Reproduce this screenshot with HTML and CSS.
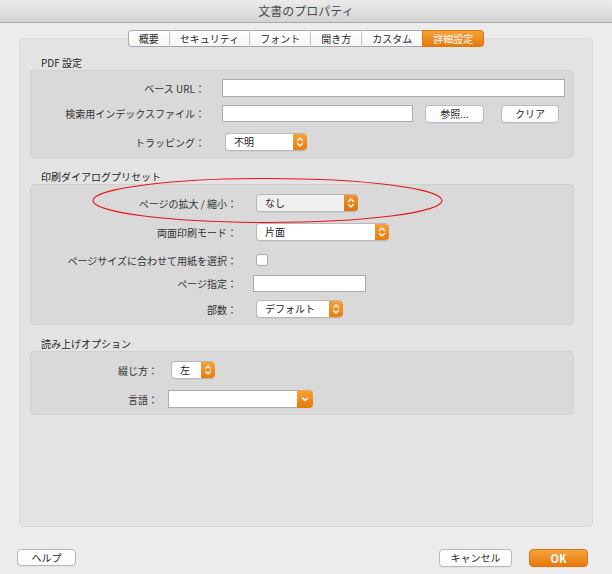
FILE: index.html
```html
<!DOCTYPE html>
<html lang="ja">
<head>
<meta charset="utf-8">
<title>文書のプロパティ</title>
<link rel="stylesheet" href="styles.css">
</head>
<body>
<div class="window">
  <div class="titlebar">文書のプロパティ</div>

  <div class="tabs">
    <div class="tab">概要</div>
    <div class="tab">セキュリティ</div>
    <div class="tab">フォント</div>
    <div class="tab">開き方</div>
    <div class="tab">カスタム</div>
    <div class="tab active">詳細設定</div>
  </div>

  <div class="panel">
    <div class="section-label">PDF 設定</div>
    <div class="group g1">
      <div class="row r-a">
        <div class="label">ベース URL：</div>
        <div class="input w343"></div>
      </div>
      <div class="row r-b">
        <div class="label">検索用インデックスファイル：</div>
        <div class="input w191"></div>
        <div class="button b-browse">参照...</div>
        <div class="button b-clear">クリア</div>
      </div>
      <div class="row r-c">
        <div class="label">トラッピング：</div>
        <div class="select w82"><span class="val">不明</span><span class="arrow"><svg width="14" height="18" viewBox="0 0 14 18"><polyline points="4.5,7.5 7,5 9.5,7.5"/><polyline points="4.5,10.5 7,13 9.5,10.5"/></svg></span></div>
      </div>
    </div>

    <div class="section-label gap">印刷ダイアログプリセット</div>
    <div class="group g2">
      <div class="row">
        <div class="label">ページの拡大 / 縮小：</div>
        <div class="select w102 dim"><span class="val">なし</span><span class="arrow"><svg width="14" height="18" viewBox="0 0 14 18"><polyline points="4.5,7.5 7,5 9.5,7.5"/><polyline points="4.5,10.5 7,13 9.5,10.5"/></svg></span></div>
      </div>
      <div class="row m11">
        <div class="label">両面印刷モード：</div>
        <div class="select w133"><span class="val">片面</span><span class="arrow"><svg width="14" height="18" viewBox="0 0 14 18"><polyline points="4.5,7.5 7,5 9.5,7.5"/><polyline points="4.5,10.5 7,13 9.5,10.5"/></svg></span></div>
      </div>
      <div class="row m10">
        <div class="label">ページサイズに合わせて用紙を選択：</div>
        <div class="checkbox"></div>
      </div>
      <div class="row m5">
        <div class="label">ページ指定：</div>
        <div class="input w113 h17"></div>
      </div>
      <div class="row m8">
        <div class="label">部数：</div>
        <div class="select w87"><span class="val">デフォルト</span><span class="arrow"><svg width="14" height="18" viewBox="0 0 14 18"><polyline points="4.5,7.5 7,5 9.5,7.5"/><polyline points="4.5,10.5 7,13 9.5,10.5"/></svg></span></div>
      </div>
    </div>

    <div class="section-label gap">読み上げオプション</div>
    <div class="group g3">
      <div class="row">
        <div class="label">綴じ方：</div>
        <div class="select w44"><span class="val">左</span><span class="arrow"><svg width="14" height="18" viewBox="0 0 14 18"><polyline points="4.5,7.5 7,5 9.5,7.5"/><polyline points="4.5,10.5 7,13 9.5,10.5"/></svg></span></div>
      </div>
      <div class="row m11">
        <div class="label">言語：</div>
        <div class="combo w145"><span class="field"></span><span class="carrow"><svg width="16" height="18" viewBox="0 0 16 18"><polyline points="5.5,8 8,10.5 10.5,8"/></svg></span></div>
      </div>
    </div>
  </div>

  <div class="footer">
    <div class="button b-help">ヘルプ</div>
    <div class="spacer"></div>
    <div class="button b-cancel">キャンセル</div>
    <div class="button b-ok">OK</div>
  </div>

  <svg class="annotation" width="352" height="48" viewBox="0 0 352 48"><ellipse cx="175.5" cy="23.5" rx="174.5" ry="22"/></svg>
</div>
</body>
</html>
```

FILE: styles.css
```css
* { box-sizing: border-box; }

html, body {
  margin: 0;
  padding: 0;
  background: #ececec;
}

body {
  font-family: "Noto Sans CJK JP", "Noto Sans", "Liberation Sans", sans-serif;
  font-size: 10px;
  color: #333;
}

.window {
  position: relative;
  width: 612px;
  height: 574px;
  background: #ececec;
  overflow: hidden;
}

.titlebar {
  height: 23px;
  background: linear-gradient(#ebebeb, #d4d4d4);
  border-bottom: 1px solid #a9a9a9;
  text-align: center;
  font-size: 12px;
  line-height: 22px;
  color: #4a4a4a;
}

.tabs {
  position: relative;
  z-index: 1;
  display: flex;
  justify-content: center;
  margin-top: 7px;
  height: 17px;
}

.tab {
  height: 17px;
  line-height: 15px;
  padding: 0 10px;
  background: linear-gradient(#ffffff, #f6f6f6);
  border-top: 1px solid #ababab;
  border-bottom: 1px solid #a4a4a4;
  border-left: 1px solid #c9c9c9;
  color: #2a2a2a;
}

.tab:first-child {
  border-left: 1px solid #ababab;
  border-radius: 4px 0 0 4px;
}

.tab.active {
  background: linear-gradient(#f4a23c, #e67a0c);
  border-color: #e07810;
  border-left-color: #e07810;
  border-right: 1px solid #d9720b;
  border-radius: 0 4px 4px 0;
  color: #fff;
}

.panel {
  margin: -9px 0 0 19px;
  width: 574px;
  height: 489px;
  background: #e3e3e3;
  border: 1px solid #d9d9d9;
  border-radius: 4px;
  padding: 16px 0 0 10px;
}

.section-label {
  height: 15px;
  line-height: 15px;
  padding-left: 11px;
  color: #1e1e1e;
}

.section-label.gap { margin-top: 11px; }

.group {
  width: 544px;
  background: #d9d9d9;
  border: 1px solid #d1d1d1;
  border-radius: 4px;
}

.g1 { padding: 8px 0 6px 0; }
.g2 { padding: 9px 0 6px 0; }
.g3 { padding: 9px 0 6px 0; }

.row {
  display: flex;
  align-items: center;
  height: 18px;
}

.r-b { margin-top: 7px; height: 19px; }
.r-c { margin-top: 10px; }
.m5 { margin-top: 5px; }
.m8 { margin-top: 8px; }
.m10 { margin-top: 10px; }
.m11 { margin-top: 11px; }

.label {
  text-align: right;
  white-space: nowrap;
  flex: none;
  color: #333;
}

.g1 .label { width: 174px; margin-right: 17px; }
.g2 .label { width: 206px; margin-right: 16px; }
.g3 .label { width: 127px; margin-right: 10px; }

.input {
  height: 18px;
  background: #fff;
  border: 1px solid #ababab;
  flex: none;
}

.h17 { height: 17px; }
.w343 { width: 343px; }
.w191 { width: 191px; height: 17px; }
.w113 { width: 113px; }

.button {
  flex: none;
  height: 18px;
  line-height: 16px;
  text-align: center;
  background: linear-gradient(#ffffff, #fafafa);
  border: 1px solid #b9b9b9;
  border-radius: 4px;
  box-shadow: 0 1px 0 rgba(0, 0, 0, 0.04);
  color: #2a2a2a;
}

.b-browse { width: 59px; margin-left: 12px; }
.b-clear { width: 58px; margin-left: 17px; }

.select {
  flex: none;
  display: flex;
  height: 18px;
  margin-left: 3px;
  background: #fff;
  border: 1px solid #b8b8b8;
  border-right: none;
  border-radius: 4px;
  overflow: hidden;
  box-shadow: 0 1px 0 rgba(0, 0, 0, 0.04);
}

.select.dim { background: #f0f0f0; }

.select .val {
  flex: 1;
  padding-left: 8px;
  line-height: 16px;
  color: #222;
  white-space: nowrap;
}

.select .arrow {
  width: 14px;
  margin-top: -1px;
  height: 18px;
  background: linear-gradient(#f5a43c, #e8790c);
  display: block;
}

.select.dim .arrow { background: linear-gradient(#ee9630, #dd720a); }

.arrow svg, .carrow svg { display: block; }

.arrow polyline, .carrow polyline {
  fill: none;
  stroke: #fff;
  stroke-width: 1.3;
  stroke-linecap: round;
  stroke-linejoin: round;
}

.w82 { width: 82px; }
.w102 { width: 102px; }
.w133 { width: 133px; }
.w87 { width: 87px; }
.w44 { width: 44px; }

.checkbox {
  flex: none;
  width: 12px;
  height: 12px;
  margin-left: 3px;
  background: #fff;
  border: 1px solid #a9a9a9;
  border-radius: 3px;
}

.combo {
  flex: none;
  display: flex;
  height: 18px;
}

.w145 { width: 145px; }

.combo .field {
  flex: 1;
  background: #fff;
  border: 1px solid #ababab;
  border-right: none;
}

.combo .carrow {
  width: 16px;
  height: 18px;
  background: linear-gradient(#f5a43c, #e8790c);
  border-radius: 0 4px 4px 0;
}

.footer {
  display: flex;
  margin-top: 22px;
  padding: 0 24px 0 17px;
}

.spacer { flex: 1; }

.b-help { width: 59px; height: 17px; line-height: 15px; }
.b-cancel { width: 73px; }
.b-ok {
  width: 59px;
  margin-left: 17px;
  background: linear-gradient(#f4a33c, #e8790b);
  border-color: #de760d;
  color: #fff;
  font-weight: bold;
  font-size: 11px;
}

.annotation {
  position: absolute;
  left: 92px;
  top: 177px;
  pointer-events: none;
}

.annotation ellipse {
  fill: none;
  stroke: #e8141a;
  stroke-width: 1.1;
}
```
